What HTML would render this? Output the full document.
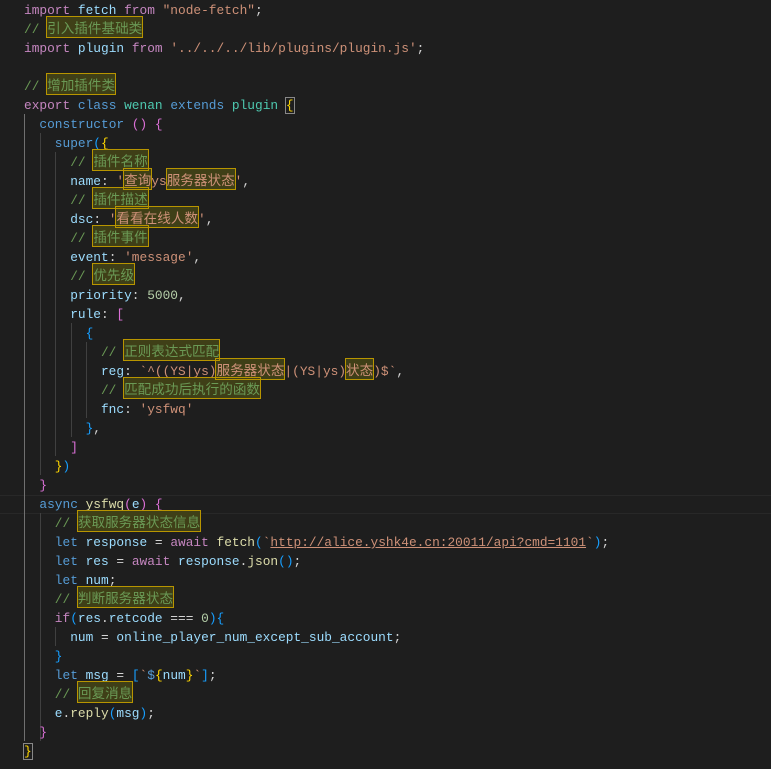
<!DOCTYPE html>
<html><head><meta charset="utf-8"><style>
html,body{margin:0;padding:0;background:#1e1e1e;width:771px;height:769px;overflow:hidden}
pre{position:absolute;left:24px;top:1px;margin:0;font-family:"Liberation Mono","Noto Sans CJK SC",monospace;font-size:12.83px;line-height:19px;color:#d4d4d4;white-space:pre}
.k{color:#c586c0}.v{color:#9cdcfe}.s{color:#ce9178}.c{color:#6a9955}.t{color:#4ec9b0}.b{color:#569cd6}.f{color:#dcdcaa}.n{color:#b5cea8}
.g{color:#ffd700}.p{color:#da70d6}.u{color:#179fff}
.h{font-family:"Noto Sans CJK SC",sans-serif;font-size:13.6px;line-height:13px;background:#3f3f17;outline:1px solid #b89500;outline-offset:0}
.bx{outline:1px solid #888}
.ul{text-decoration:underline}
.guide{position:absolute;width:1px;background:#404040}
.cur{position:absolute;left:0;width:771px;height:17px;top:495px;border-top:1px solid #282828;border-bottom:1px solid #282828}
</style></head><body>
<div class="cur"></div>
<div class="guide" style="left:24px;top:114px;height:627px;background:#707070"></div>
<div class="guide" style="left:40px;top:133px;height:342px"></div>
<div class="guide" style="left:40px;top:513px;height:228px"></div>
<div class="guide" style="left:55px;top:152px;height:304px"></div>
<div class="guide" style="left:55px;top:627px;height:19px"></div>
<div class="guide" style="left:71px;top:323px;height:114px"></div>
<div class="guide" style="left:86px;top:342px;height:76px"></div>
<pre><span class="k">import</span> <span class="v">fetch</span> <span class="k">from</span> <span class="s">"node-fetch"</span>;
<span class="c">// <span class="h">引入插件基础类</span></span>
<span class="k">import</span> <span class="v">plugin</span> <span class="k">from</span> <span class="s">'../../../lib/plugins/plugin.js'</span>;

<span class="c">// <span class="h">增加插件类</span></span>
<span class="k">export</span> <span class="b">class</span> <span class="t">wenan</span> <span class="b">extends</span> <span class="t">plugin</span> <span class="g bx">{</span>
  <span class="b">constructor</span> <span class="p">()</span> <span class="p">{</span>
    <span class="b">super</span><span class="u">(</span><span class="g">{</span>
      <span class="c">// <span class="h">插件名称</span></span>
      <span class="v">name</span>: <span class="s">'<span class="h">查询</span>ys<span class="h">服务器状态</span>'</span>,
      <span class="c">// <span class="h">插件描述</span></span>
      <span class="v">dsc</span>: <span class="s">'<span class="h">看看在线人数</span>'</span>,
      <span class="c">// <span class="h">插件事件</span></span>
      <span class="v">event</span>: <span class="s">'message'</span>,
      <span class="c">// <span class="h">优先级</span></span>
      <span class="v">priority</span>: <span class="n">5000</span>,
      <span class="v">rule</span>: <span class="p">[</span>
        <span class="u">{</span>
          <span class="c">// <span class="h">正则表达式匹配</span></span>
          <span class="v">reg</span>: <span class="s">`^((YS|ys)<span class="h">服务器状态</span>|(YS|ys)<span class="h">状态</span>)$`</span>,
          <span class="c">// <span class="h">匹配成功后执行的函数</span></span>
          <span class="v">fnc</span>: <span class="s">'ysfwq'</span>
        <span class="u">}</span>,
      <span class="p">]</span>
    <span class="g">}</span><span class="u">)</span>
  <span class="p">}</span>
  <span class="b">async</span> <span class="f">ysfwq</span><span class="p">(</span><span class="v">e</span><span class="p">)</span> <span class="p">{</span>
    <span class="c">// <span class="h">获取服务器状态信息</span></span>
    <span class="b">let</span> <span class="v">response</span> = <span class="k">await</span> <span class="f">fetch</span><span class="u">(</span><span class="s">`<span class="ul">http://alice.yshk4e.cn:20011/api?cmd=1101</span>`</span><span class="u">)</span>;
    <span class="b">let</span> <span class="v">res</span> = <span class="k">await</span> <span class="v">response</span>.<span class="f">json</span><span class="u">()</span>;
    <span class="b">let</span> <span class="v">num</span>;
    <span class="c">// <span class="h">判断服务器状态</span></span>
    <span class="k">if</span><span class="u">(</span><span class="v">res</span>.<span class="v">retcode</span> === <span class="n">0</span><span class="u">)</span><span class="u">{</span>
      <span class="v">num</span> = <span class="v">online_player_num_except_sub_account</span>;
    <span class="u">}</span>
    <span class="b">let</span> <span class="v">msg</span> = <span class="u">[</span><span class="s">`</span><span class="b">$</span><span class="g">{</span><span class="v">num</span><span class="g">}</span><span class="s">`</span><span class="u">]</span>;
    <span class="c">// <span class="h">回复消息</span></span>
    <span class="v">e</span>.<span class="f">reply</span><span class="u">(</span><span class="v">msg</span><span class="u">)</span>;
  <span class="p">}</span>
<span class="g bx">}</span></pre>
</body></html>
